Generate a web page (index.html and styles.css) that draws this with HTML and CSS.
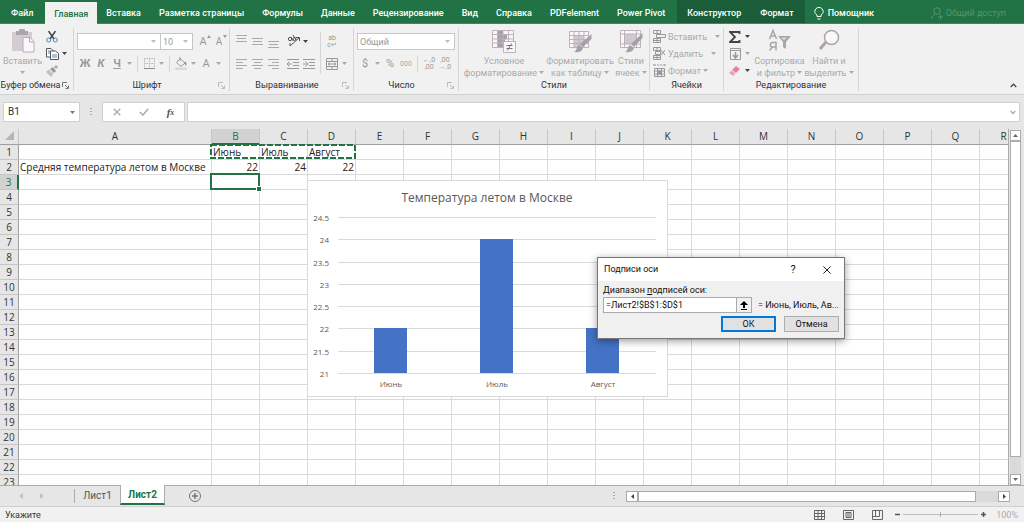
FILE: index.html
```html
<!DOCTYPE html>
<html lang="ru">
<head>
<meta charset="utf-8">
<title>Лист2</title>
<link rel="stylesheet" href="styles.css">
</head>
<body>
<svg class="defs" aria-hidden="true">
  <symbol id="down" viewBox="0 0 5 3"><path d="M0 0h5L2.500 3z" fill="currentColor"/></symbol>
  <symbol id="launch" viewBox="0 0 7 7"><path d="M.5 5V.5H5M3 3l3 3M6.500 3.500v3h-3" fill="none" stroke="currentColor"/></symbol>
</svg>

<nav class="tabs">
  <a href="#" class="tab file">Файл</a>
  <a href="#" class="tab active">Главная</a>
  <a href="#" class="tab">Вставка</a>
  <a href="#" class="tab">Разметка страницы</a>
  <a href="#" class="tab">Формулы</a>
  <a href="#" class="tab">Данные</a>
  <a href="#" class="tab">Рецензирование</a>
  <a href="#" class="tab">Вид</a>
  <a href="#" class="tab">Справка</a>
  <a href="#" class="tab">PDFelement</a>
  <a href="#" class="tab">Power Pivot</a>
  <span class="context">
    <a href="#" class="tab">Конструктор</a>
    <a href="#" class="tab">Формат</a>
  </span>
  <a href="#" class="tab help"><svg width="10" height="13" viewBox="0 0 10 13" fill="none" stroke="#fff"><path d="M3 9.500V8C1.500 7 .8 6 .8 4.600a4.200 4.200 0 0 1 8.400 0C9.200 6 8.500 7 7 8v1.500zM3.500 12h3"/></svg>Помощник</a>
  <button class="share"><svg width="12" height="13" viewBox="0 0 12 13" fill="none" stroke="currentColor"><circle cx="6" cy="4" r="3.300"/><path d="M.5 12C.8 9.500 2 8 4 7.300M7 10h5M9.500 7.500v5"/></svg>Общий доступ</button>
</nav>

<section class="ribbon">
  <div class="group clipboard">
    <div class="tools">
      <button class="big paste"><svg width="24" height="24" viewBox="0 0 24 24"><path d="M1 3h20v19H1z" fill="#d3ccd1"/><path d="M5 2h3a3 3 0 0 1 6 0h3v4H5z" fill="#a9a5a8"/><path d="M12 8.500h7l4 4V23H12z" fill="#faf6f9" stroke="#b5aeb3"/><path d="M18.500 8.500V13H23" fill="none" stroke="#b5aeb3"/></svg><span>Вставить</span><svg class="dn"><use href="#down"/></svg></button>
      <div class="stack live">
        <button class="ib" aria-label="Вырезать"><svg width="12" height="12" viewBox="0 0 12 12" fill="none"><path d="M2.500 0 8 8M9.500 0 4 8" stroke="#444" stroke-width="1.500"/><circle cx="2.700" cy="9" r="2" stroke="#4a86b8"/><circle cx="9.300" cy="9" r="2" stroke="#4a86b8"/></svg></button>
        <div class="row"><button class="ib" aria-label="Копировать"><svg width="13" height="12" viewBox="0 0 13 12" fill="#fff" stroke="#555"><path d="M.5.500H5l2 2V9H.5z"/><path d="M4.500 3h5l3 2.500v6h-8z"/><path d="M2 3h2M2 5h2M6 7h5M6 9h5" stroke="#4a86b8"/></svg></button><button class="dd" aria-label="Ещё"><svg class="dn"><use href="#down"/></svg></button></div>
        <button class="ib" aria-label="Формат по образцу"><svg width="12" height="12" viewBox="0 0 12 12"><path d="M8 2l2-2 2 2-2 2z" fill="#aaa"/><path d="M4 4l3-2 3 4-2 2z" fill="#999"/><path d="M3 4.500 7.500 9 5 12 0 7z" fill="#c4c0c3"/></svg></button>
      </div>
    </div>
    <div class="caption"><span>Буфер обмена</span><button class="launch" aria-label="Буфер обмена"><svg width="7" height="7"><use href="#launch"/></svg></button></div>
  </div>

  <div class="group font">
    <div class="tools two">
      <div class="row">
        <div class="combo name"><input aria-label="Шрифт"><svg class="dn"><use href="#down"/></svg></div>
        <div class="combo size"><input aria-label="Размер" value="10"><svg class="dn"><use href="#down"/></svg></div>
        <button class="ib letter">A<svg class="mark" width="4" height="3" viewBox="0 0 4 3"><path d="M0 3 2 0l2 3z" fill="#999"/></svg></button>
        <button class="ib letter small">A<svg class="mark" width="4" height="3" viewBox="0 0 4 3"><path d="M0 0h4L2 3z" fill="#999"/></svg></button>
      </div>
      <div class="row">
        <button class="ib letter"><b>Ж</b></button><button class="ib letter"><b><i>К</i></b></button><button class="ib letter"><b><u>Ч</u></b></button><button class="dd"><svg class="dn"><use href="#down"/></svg></button>
        <i class="sep"></i>
        <button class="ib" aria-label="Границы"><svg width="11" height="11" viewBox="0 0 11 11" fill="none" stroke="#b9b1b7"><path d="M0 .5h11M0 5.500h11M.5 0v10M5.500 0v10M10.500 0v10" stroke-dasharray="1.500 1"/><path d="M0 10.500h11" stroke="#8e8a8d"/></svg></button><button class="dd"><svg class="dn"><use href="#down"/></svg></button>
        <i class="sep"></i>
        <button class="ib" aria-label="Заливка"><svg width="13" height="13" viewBox="0 0 13 13" fill="none"><path d="M5 1.500 10 6 6 9.500 1.500 5.500zM5 4V0" stroke="#999"/><path d="M10 4c2 2 2 4 1 4.500S9.500 7 10 4z" fill="#999"/><path d="M0 10.500h12V13H0z" fill="#ddd8dc"/></svg></button><button class="dd"><svg class="dn"><use href="#down"/></svg></button>
        <button class="ib letter">A</button><button class="dd"><svg class="dn"><use href="#down"/></svg></button>
      </div>
    </div>
    <div class="caption"><span>Шрифт</span><button class="launch dim" aria-label="Шрифт"><svg width="7" height="7"><use href="#launch"/></svg></button></div>
  </div>

  <div class="group align">
    <div class="tools">
      <div class="two">
        <div class="row">
          <button class="ib" aria-label="По верхнему краю"><svg width="11" height="13" viewBox="0 0 11 13"><path d="M0 .5h11M1 3.500h9M0 6.500h11" stroke="#aaa"/></svg></button>
          <button class="ib" aria-label="По середине"><svg width="11" height="13" viewBox="0 0 11 13"><path d="M0 3.500h11M1 6.500h9M0 9.500h11" stroke="#aaa"/></svg></button>
          <button class="ib" aria-label="По нижнему краю"><svg width="11" height="13" viewBox="0 0 11 13"><path d="M0 6.500h11M1 9.500h9M0 12.500h11" stroke="#aaa"/></svg></button>
          <span class="gap"></span>
          <button class="ib" aria-label="Ориентация"><svg width="13" height="13" viewBox="0 0 13 13" fill="none" stroke="#555"><path d="M3 11 12 3M9 2.500h3.500V6M3 11l0-3"/><circle cx="3" cy="4" r="1.700"/><path d="M4 2l2 4M6 0l3 5"/><circle cx="7.500" cy="4" r="1.500"/></svg></button><button class="dd live"><svg class="dn"><use href="#down"/></svg></button>
        </div>
        <div class="row">
          <button class="ib" aria-label="По левому краю"><svg width="11" height="10" viewBox="0 0 11 10"><path d="M0 .5h11M0 3.500h7M0 6.500h11M0 9.500h7" stroke="#aaa"/></svg></button>
          <button class="ib" aria-label="По центру"><svg width="11" height="10" viewBox="0 0 11 10"><path d="M0 .5h11M2 3.500h7M0 6.500h11M2 9.500h7" stroke="#aaa"/></svg></button>
          <button class="ib" aria-label="По правому краю"><svg width="11" height="10" viewBox="0 0 11 10"><path d="M0 .5h11M4 3.500h7M0 6.500h11M4 9.500h7" stroke="#aaa"/></svg></button>
          <span class="gap"></span>
          <button class="ib" aria-label="Уменьшить отступ"><svg width="12" height="10" viewBox="0 0 12 10" fill="none" stroke="#999"><path d="M0 .5h12M6 3.500h6M6 6.500h6M0 9.500h12M0 5h5M2.500 2.500 0 5l2.500 2.500"/></svg></button>
          <button class="ib" aria-label="Увеличить отступ"><svg width="12" height="10" viewBox="0 0 12 10" fill="none" stroke="#999"><path d="M0 .5h12M6 3.500h6M6 6.500h6M0 9.500h12M0 5h5M2.500 2.500 5 5 2.500 7.500"/></svg></button>
        </div>
      </div>
      <i class="sep tall"></i>
      <div class="two">
        <div class="row"><button class="ib wrap" aria-label="Перенести текст"><span>ab</span><span>c↵</span></button></div>
        <div class="row"><button class="ib" aria-label="Объединить"><svg width="12" height="12" viewBox="0 0 12 12" fill="none" stroke="#999"><path d="M.5.500h11v11H.5zM0 3.500h12M0 8.500h12M6 0v3M6 9v3M2 6h8M3.500 4.500 2 6l1.500 1.500M8.500 4.500 10 6 8.500 7.500"/></svg></button><button class="dd"><svg class="dn"><use href="#down"/></svg></button></div>
      </div>
    </div>
    <div class="caption"><span>Выравнивание</span><button class="launch dim" aria-label="Выравнивание"><svg width="7" height="7"><use href="#launch"/></svg></button></div>
  </div>

  <div class="group number">
    <div class="tools two">
      <div class="row"><div class="combo format"><input aria-label="Числовой формат" value="Общий"><svg class="dn"><use href="#down"/></svg></div></div>
      <div class="row">
        <button class="ib letter">$</button><button class="dd"><svg class="dn"><use href="#down"/></svg></button>
        <button class="ib letter">%</button><button class="ib zeros">000</button>
        <i class="sep"></i>
        <button class="ib wrap"><span>←,0</span><span>,00</span></button><button class="ib wrap"><span>,00</span><span>→,0</span></button>
      </div>
    </div>
    <div class="caption"><span>Число</span><button class="launch dim" aria-label="Число"><svg width="7" height="7"><use href="#launch"/></svg></button></div>
  </div>

  <div class="group styles">
    <div class="tools">
      <button class="big cond"><svg width="24" height="24" viewBox="0 0 24 24"><path d="M.5 1.500h21v17H.5z" fill="#faf6f9"/><path d="M6 1h5v5H6zM6 6h9v4H6zM6 10h7v4H6zM6 14h5v5H6z" fill="#a5a1a4"/><path d="M.5 1.500h21v17H.5zM0 5.500h22M0 10h22M0 14h22M5.500 1v18M11 1v18M16.500 1v18" fill="none" stroke="#bdb3ba"/><path d="M11.500 12.500h12v11h-12z" fill="#faf6f9" stroke="#bdb3ba"/><path d="M14.500 16.500h6M14.500 19.500h6M19.500 14.500l-4 7" stroke="#777"/></svg><span>Условное<br>форматирование <svg class="dn"><use href="#down"/></svg></span></button>
      <button class="big table"><svg width="24" height="24" viewBox="0 0 24 24"><path d="M1.500 2.500h19v16h-19z" fill="#faf6f9"/><path d="M6 6h10v12H6z" fill="#d0c9ce"/><path d="M1.500 2.500h19v16h-19zM1 6.500h20M1 10.500h20M1 14.500h20M6 2v17M11 2v17M16 2v17" fill="none" stroke="#bdb3ba"/><path d="M23.500 5v5L15 18l-3-3z" fill="#a5a1a4"/><path d="M11 16l4 3c-1 4-5 5-9 4 3-1 2-5 5-7z" fill="#a5a1a4"/></svg><span>Форматировать<br>как таблицу <svg class="dn"><use href="#down"/></svg></span></button>
      <button class="big cell"><svg width="24" height="24" viewBox="0 0 24 24"><path d="M1.500 1.500h20v17h-20z" fill="#faf6f9" stroke="#bdb3ba"/><path d="M5 5h13v10H5z" fill="#cfc8cd"/><path d="M5.500 1v18M1 5h21M1 15h21M17.500 1v18" stroke="#bdb3ba"/><path d="M23.500 4v5L15 18l-3-3z" fill="#a5a1a4"/><path d="M11 16l4 3c-1 4-5 5-9 4 3-1 2-5 5-7z" fill="#a5a1a4"/></svg><span>Стили<br>ячеек <svg class="dn"><use href="#down"/></svg></span></button>
    </div>
    <div class="caption"><span>Стили</span></div>
  </div>

  <div class="group cells">
    <div class="tools stack">
      <button class="line"><svg width="13" height="13" viewBox="0 0 13 13" fill="none" stroke="#999"><path d="M.5.500h7v3h-7zM.5 8.500h7v4h-7zM4 0v4M4 8v5M.5 10.500h7M3.500 4.500h9v3h-9z"/></svg>Вставить<svg class="dn"><use href="#down"/></svg></button>
      <button class="line"><svg width="13" height="13" viewBox="0 0 13 13" fill="none" stroke="#999"><path d="M.5.500h7v3h-7zM.5 8.500h7v4h-7zM4 0v4M4 8v5M.5 10.500h7M2.500 4.500h5v3h-5zM8 3l4 5M12 3 8 8"/></svg>Удалить<svg class="dn"><use href="#down"/></svg></button>
      <button class="line close"><svg width="13" height="13" viewBox="0 0 13 13" fill="none" stroke="#999"><path d="M1 0v2M12 0v2M1 1h11" stroke-dasharray="2 1"/><path d="M1.500 4.500h10v8h-10zM1 7h11M1 10h11M4.500 4v9M8.500 4v9"/><path d="M5 7h3v3H5z" fill="#999"/></svg>Формат<svg class="dn"><use href="#down"/></svg></button>
    </div>
    <div class="caption"><span>Ячейки</span></div>
  </div>

  <div class="group editing">
    <div class="tools">
      <div class="stack">
        <div class="row live"><button class="ib" aria-label="Автосумма"><svg width="12" height="12" viewBox="0 0 12 12"><path d="M10.500 3V1H1l5 5-5 5h9.500V9" fill="none" stroke="#444" stroke-width="1.800"/></svg></button><button class="dd"><svg class="dn"><use href="#down"/></svg></button></div>
        <div class="row"><button class="ib" aria-label="Заполнить"><svg width="11" height="12" viewBox="0 0 11 12" fill="none" stroke="#999"><path d="M.5.500h10v11H.5zM0 2.500h11"/><path d="M5.500 4v6M3 7l2.500 3L8 7" stroke-width="1.500"/></svg></button><button class="dd"><svg class="dn"><use href="#down"/></svg></button></div>
        <div class="row live"><button class="ib" aria-label="Очистить"><svg width="12" height="10" viewBox="0 0 12 10"><path d="M7 0l4 3-4 4-4-3z" fill="#ea8095"/><path d="M2.500 4.500l4 3L4 10 0 7z" fill="#f0a3b1"/></svg></button><button class="dd"><svg class="dn"><use href="#down"/></svg></button></div>
      </div>
      <button class="big sort"><svg width="24" height="24" viewBox="0 0 24 24"><g fill="none" stroke="#a9a5a8" stroke-width="1.500"><path d="M1.500 10 5 1.500 8.500 10M2.500 7h5M8 21.500v-8H4.500a2 2 0 0 0 0 4.500H8M4.500 18l-3 3.500"/></g><path d="M10 7h13l-5 6v7l-3-2v-5z" fill="#a9a5a8"/><path d="M13 8.500h6l-3 3z" fill="#d9d4d8"/></svg><span>Сортировка<br>и фильтр <svg class="dn"><use href="#down"/></svg></span></button>
      <button class="big find"><svg width="24" height="24" viewBox="0 0 24 24" fill="none"><path d="M9 13 3 20" stroke="#a9a5a8" stroke-width="3"/><circle cx="14.500" cy="8.500" r="7" fill="#faf6f9" stroke="#a9a5a8" stroke-width="1.500"/></svg><span>Найти и<br>выделить <svg class="dn"><use href="#down"/></svg></span></button>
    </div>
    <div class="caption"><span>Редактирование</span></div>
  </div>
  <button class="collapse" aria-label="Свернуть ленту"><svg width="7" height="5" viewBox="0 0 7 5"><path d="M.7 4 3.500 1.200 6.300 4" fill="none" stroke="#444" stroke-width="1.300"/></svg></button>
</section>

<section class="formula">
  <div class="namebox"><input aria-label="Имя" value="B1"><svg class="dn"><use href="#down"/></svg></div>
  <span class="grip"></span>
  <div class="fx">
    <button aria-label="Отмена"><svg width="8" height="8" viewBox="0 0 8 8"><path d="M.7.700l6.600 6.600M7.300.7.700 7.300" stroke="#aaa" stroke-width="1.300"/></svg></button>
    <button aria-label="Ввод"><svg width="10" height="8" viewBox="0 0 10 8"><path d="M.8 4 4 7 9.200.8" fill="none" stroke="#aaa" stroke-width="1.500"/></svg></button>
    <button class="fn">f<small>x</small></button>
  </div>
  <div class="entry"><input aria-label="Строка формул"><svg width="6" height="5" viewBox="0 0 6 5"><path d="M.7 1 3 3.500 5.300 1" fill="none" stroke="#aaa" stroke-width="1.300"/></svg></div>
</section>

<main class="work">
  <div class="sheet" id="sheet">
    <table id="grid"></table>
    <svg class="ants" aria-hidden="true"><rect width="100%" height="100%"/></svg>
    <div class="cursor"></div>
    <svg class="chart" viewBox="0 0 359 215" id="chart" role="img" aria-label="Температура летом в Москве"></svg>
  </div>
  <div class="vscroll">
    <button aria-label="Вверх"><svg width="5" height="3" viewBox="0 0 5 3"><path d="M0 3 2.500 0 5 3z" fill="#666"/></svg></button>
    <div class="track"><span class="thumb"></span></div>
    <button aria-label="Вниз"><svg width="5" height="3" viewBox="0 0 5 3"><path d="M0 0h5L2.500 3z" fill="#666"/></svg></button>
  </div>
</main>

<footer class="sheets">
  <div class="arrows"><button aria-label="Назад"><svg width="4" height="6" viewBox="0 0 4 6"><path d="M4 0v6L0 3z" fill="#c4c4c4"/></svg></button><button aria-label="Вперёд"><svg width="4" height="6" viewBox="0 0 4 6"><path d="M0 0v6l4-3z" fill="#c4c4c4"/></svg></button></div>
  <button class="sheet-tab">Лист1</button>
  <button class="sheet-tab on">Лист2</button>
  <button class="add" aria-label="Новый лист"><svg width="12" height="12" viewBox="0 0 12 12" fill="none" stroke="#777"><circle cx="6" cy="6" r="5.500"/><path d="M3 6h6M6 3v6" stroke-width="1.500"/></svg></button>
  <span class="grip"></span>
  <div class="hscroll">
    <button aria-label="Влево"><svg width="3" height="5" viewBox="0 0 3 5"><path d="M3 0v5L0 2.500z" fill="#444"/></svg></button>
    <div class="track"><span class="thumb"></span></div>
    <button aria-label="Вправо"><svg width="3" height="5" viewBox="0 0 3 5"><path d="M0 0v5l3-2.500z" fill="#444"/></svg></button>
  </div>
</footer>

<footer class="status">
  <span class="mode">Укажите</span>
  <button aria-label="Обычный"><svg width="11" height="10" viewBox="0 0 11 10" fill="none" stroke="#666"><path d="M.5.500h10v9H.5zM0 3.500h11M0 6.500h11M4 0v10M7.500 0v10"/></svg></button>
  <button aria-label="Разметка"><svg width="11" height="10" viewBox="0 0 11 10" fill="none" stroke="#666"><path d="M.5.500h10v9H.5zM3 2.500h5v5H3zM4 4h3M4 6h3"/></svg></button>
  <button aria-label="Страничный"><svg width="11" height="10" viewBox="0 0 11 10" fill="none" stroke="#666"><path d="M.5.500h10v9H.5zM3.500 0v6M0 6.500h7.500V0"/></svg></button>
  <div class="zoom"><button aria-label="Мельче"><svg width="5" height="5" viewBox="0 0 5 5"><path d="M0 2.500h5" stroke="#555" stroke-width="1.500"/></svg></button><span class="rail"></span><button aria-label="Крупнее"><svg width="5" height="5" viewBox="0 0 5 5"><path d="M0 2.500h5M2.500 0v5" stroke="#555" stroke-width="1.500"/></svg></button><span class="pct">100%</span></div>
</footer>

<div class="dialog" role="dialog" aria-labelledby="dlg">
  <header><h2 id="dlg">Подписи оси</h2><button aria-label="Справка" class="q">?</button><button aria-label="Закрыть"><svg width="8" height="8" viewBox="0 0 8 8"><path d="M.4.400l7.200 7.200M7.600.4.400 7.600" stroke="#222"/></svg></button></header>
  <div class="body">
    <label for="range">Диапазон <u>п</u>одписей оси:</label>
    <div class="pick">
      <div class="range"><input id="range" value="=Лист2!$B$1:$D$1"><button aria-label="Свернуть"><svg width="8" height="9" viewBox="0 0 8 9"><path d="M4 0l4 4H5v3H3V4H0zM1 8h6v1H1z" fill="#000"/></svg></button></div>
      <output for="range">= Июнь, Июль, Ав...</output>
    </div>
    <div class="actions"><button class="ok">ОК</button><button>Отмена</button></div>
  </div>
</div>
<script src="script.js"></script>
</body>
</html>
```
FILE: styles.css
```css
* { box-sizing: border-box; }
html, body { height: 100%; }
body {
  margin: 0;
  display: flex;
  flex-direction: column;
  overflow: hidden;
  position: relative;
  background: #e6e6e6;
  color: #333;
  font: 9px/12px Roboto, "Open Sans", sans-serif;
}
button, input { font: inherit; color: inherit; }
button { border: 0; padding: 0; background: none; display: flex; align-items: center; justify-content: center; }
input { border: 0; padding: 0; min-width: 0; background: none; outline: 0; }
svg { flex: none; }
.defs { position: absolute; width: 0; height: 0; }
.dn { width: 5px; height: 3px; }

/* tab strip */
.tabs { display: flex; align-items: stretch; height: 24px; background: #217346; flex: none; border-bottom: 1px solid #3f8660; }
.tab { display: flex; align-items: center; padding: 3px 9px 0; color: #fff; text-decoration: none; white-space: nowrap; font-weight: 500; }
.tab.file { padding-left: 11px; padding-right: 12px; }
.tab.active { background: #f1f1f1; color: #217346; margin-top: 2px; margin-bottom: -1px; padding-top: 1px; }
.context { display: flex; background: #1b5d38; margin-left: 3px; padding-right: 2px; }
.context .tab { padding-left: 10px; }
.help { gap: 4px; }
.share { margin-left: auto; margin-right: 18px; padding-top: 3px; gap: 3px; color: #57936f; white-space: nowrap; }

/* ribbon */
.ribbon { display: flex; flex: none; height: 71px; background: #f1f1f1; border-bottom: 1px solid #d0d0d0; color: #aaa; padding: 4px 0 3px; }
.group { display: flex; flex-direction: column; justify-content: space-between; border-right: 1px solid #d6d6d6; padding: 0 3px; flex: none; }
.clipboard { width: 74px; }
.font { width: 156px; }
.align { width: 124px; }
.number { width: 105px; }
.styles { width: 191px; }
.cells { width: 74px; }
.editing { width: 135px; }
.tools { display: flex; }
.two { display: flex; flex-direction: column; gap: 5px; padding-top: 5px; }
.align .tools .two:first-child { width: 84px; }
.row { display: flex; align-items: center; height: 17px; }
.stack { display: flex; flex-direction: column; }
.live { color: #444; }
.ib { width: 16px; height: 17px; position: relative; flex: none; }
.dd { width: 9px; height: 17px; flex: none; }
.gap { width: 4px; }
.sep { width: 1px; height: 16px; background: #d6d6d6; margin: 0 3px; flex: none; }
.sep.tall { height: 42px; margin-top: 4px; }
.letter { font-size: 11px; color: #999; }
.letter.small { font-size: 10px; }
.letter .mark { position: absolute; right: 0; top: 2px; }
.zeros { font-size: 7px; }
.wrap { flex-direction: column; font-size: 7px; line-height: 7px; color: #999; white-space: nowrap; }
.combo { display: flex; align-items: center; height: 17px; border: 1px solid #c6c6c6; background: #fff; padding: 0 4px 0 2px; color: #999; }
.combo input { flex: 1; }
.combo .dn { color: #bbb; }
.combo.name { width: 84px; }
.combo.size { width: 33px; margin: 0 2px 0 -1px; }
.combo.format { width: 98px; }
.big { flex-direction: column; justify-content: flex-start; line-height: 12px; white-space: nowrap; padding-top: 1px; gap: 2px; flex: none; }
.big .dn { vertical-align: 2px; }
.paste { width: 39px; margin-right: 2px; }
.paste > .dn { margin-top: 2px; }
.cond { width: 84px; }
.table { width: 68px; }
.cell { width: 34px; }
.sort { width: 51px; margin-left: 2px; }
.find { width: 48px; }
.line { height: 17px; gap: 2px; justify-content: flex-start; }
.line .dn { margin-left: 6px; }
.line.close .dn { margin-left: 0; }
.caption { display: flex; align-items: center; color: #333; height: 12px; white-space: nowrap; }
.caption span { flex: 1; text-align: center; }
.clipboard .caption { margin-left: -3px; }
.caption .launch { color: #777; width: 9px; }
.caption .launch.dim { color: #bbb; }
.collapse { margin-left: auto; align-self: flex-end; width: 22px; height: 12px; }

/* formula bar */
.formula { display: flex; flex: none; height: 34px; padding: 7px 4px 7px 3px; }
.namebox, .fx, .entry { display: flex; align-items: center; background: #fff; border: 1px solid #d0d0d0; height: 20px; }
.namebox { width: 77px; padding: 0 4px; font-size: 10px; }
.namebox input, .entry input { flex: 1; }
.namebox .dn, .entry svg { color: #777; }
.grip { width: 2px; height: 9px; align-self: center; background: repeating-linear-gradient(#aaa 0 1px, transparent 1px 3px); margin: 0 10px; }
.fx { width: 83px; margin-right: 2px; }
.fx button { flex: 1; }
.fn { font: italic bold 11px "Liberation Serif", serif; color: #555; }
.fn small { font-size: 8px; }
.entry { flex: 1; padding: 0 3px; }

/* worksheet */
.work { display: flex; flex: 1; min-height: 0; border-bottom: 1px solid #ababab; }
.sheet { flex: 1; min-width: 0; overflow: hidden; position: relative; border-right: 1px solid #ababab; }
#grid { border-collapse: separate; border-spacing: 0; table-layout: fixed; background: #fff; color: #222; font-family: "Open Sans", sans-serif; font-size: 10px; line-height: 14px; }
#grid th { background: #e6e6e6; font-weight: 400; padding: 0; border-right: 1px solid #c6c6c6; border-bottom: 1px solid #c6c6c6; text-align: center; color: #333; }
#grid thead th { height: 16px; line-height: 13px; border-bottom-color: #9f9f9f; }
#grid td { height: 15px; padding: 0 1px; border-right: 1px solid #d9d9d9; border-bottom: 1px solid #d9d9d9; white-space: nowrap; }
#grid td.num { text-align: right; }
#grid tbody th { border-right-color: #9f9f9f; }
#grid th.sel { background: #d2d2d2; color: #217346; }
#grid thead th.sel { border-bottom: 2px solid #217346; }
#grid tbody th.sel { border-right: 2px solid #217346; }
.ants { position: absolute; left: 211px; top: 16px; width: 144px; height: 13px; overflow: visible; }
.ants rect { fill: none; stroke: #217346; stroke-width: 2; stroke-dasharray: 6 2; }
.cursor { position: absolute; left: 210px; top: 44px; width: 50px; height: 17px; border: 2px solid #217346; }
.cursor::after { content: ""; position: absolute; right: -3px; bottom: -3px; width: 4px; height: 4px; background: #217346; outline: 1px solid #fff; }
.chart { position: absolute; left: 307px; top: 51px; width: 361px; height: 217px; background: #fff; border: 1px solid #d9d9d9; font-family: "Open Sans", sans-serif; }
.chart text { fill: #595959; font-size: 8px; text-anchor: middle; }
.chart .title { font-size: 12px; }
.chart .tick { text-anchor: end; }
.chart line { stroke: #d9d9d9; }
.chart rect { fill: #4472c4; }

.vscroll { width: 15px; display: flex; flex-direction: column; padding: 1px 3px 0 1px; }
.vscroll button { height: 11px; background: #fff; border: 1px solid #ababab; }
.track { flex: 1; display: flex; background: #dadada; }
.vscroll .track { flex-direction: column; }
.thumb { background: #fff; border: 1px solid #ababab; }
.vscroll .thumb { height: 95%; }

/* sheet tabs */
.sheets { display: flex; flex: none; height: 21px; border-bottom: 1px solid #cfcfcf; }
.arrows { display: flex; width: 75px; justify-content: flex-start; gap: 17px; padding-left: 19px; border-right: 1px solid #ababab; margin: 3px 0; }
.sheet-tab { width: 45px; height: 20px; font-size: 10px; color: #555; }
.sheet-tab.on { background: #fff; color: #217346; font-weight: 700; border: solid #ababab; border-width: 0 1px; border-bottom: 2px solid #217346; margin-top: -1px; padding-top: 2px; }
.add { margin-left: 23px; width: 14px; }
.sheets .grip { margin-left: auto; margin-right: 11px; }
.hscroll { display: flex; width: 38%; max-width: 384px; margin: 5px 14px 4px 0; }
.hscroll button { width: 12px; background: #fff; border: 1px solid #ababab; }
.hscroll .thumb { width: 94%; }

/* status bar */
.status { display: flex; align-items: center; flex: none; height: 15px; background: #f1f1f1; padding: 0 6px 0 5px; }
.status > button { width: 11px; margin-right: 18px; }
.status > button:nth-of-type(3) { margin-right: 12px; }
.mode { flex: 1; }
.zoom { display: flex; align-items: center; gap: 3px; }
.rail { width: 75px; height: 5px; background: linear-gradient(#aaa, #aaa) center / 1px 5px no-repeat, linear-gradient(#bbb, #bbb) center / 100% 1px no-repeat; }
.pct { color: #aaa; margin-left: 7px; }

/* dialog */
.dialog { position: absolute; left: 597px; top: 257px; width: 248px; background: #f0f0f0; border: 1px solid #777; box-shadow: 0 2px 8px rgba(0,0,0,.4); color: #111; }
.dialog header { display: flex; height: 23px; background: #fff; padding-left: 6px; }
.dialog h2 { flex: 1; margin: 0; font-size: 9px; font-weight: 400; line-height: 23px; }
.dialog header button { width: 34px; }
.dialog .q { font-size: 11px; }
.body { padding: 3px 5px 6px; display: flex; flex-direction: column; }
.pick { display: flex; align-items: center; justify-content: space-between; height: 16px; margin-top: 1px; }
.range { display: flex; width: 149px; height: 16px; background: #fff; border: 1px solid #aaa; }
.range input { flex: 1; padding-left: 2px; }
.range button { width: 15px; border-left: 1px solid #aaa; background: #f0f0f0; }
.actions { display: flex; justify-content: flex-end; gap: 8px; margin-top: 3px; }
.actions button { width: 55px; height: 16px; border: 1px solid #adadad; background: #e1e1e1; }
.actions .ok { border: 2px solid #0078d7; }
```
FILE: script.js
```js
const HEAD = 19, FIRST = 193, COL = 48, ROW = 15;
const values = {
  B1: 'Июнь', C1: 'Июль', D1: 'Август',
  A2: 'Средняя температура летом в Москве', B2: 22, C2: 24, D2: 22
};

function columnName(i) {
  return (i >= 26 ? columnName(Math.floor(i / 26) - 1) : '') + String.fromCharCode(65 + i % 26);
}

/* as many columns and rows as the visible area holds */
function drawGrid() {
  const sheet = document.getElementById('sheet');
  const grid = document.getElementById('grid');
  const extra = Math.ceil((sheet.clientWidth - HEAD - FIRST) / COL);
  const rows = Math.ceil((sheet.clientHeight - 16) / ROW);
  const names = Array.from({ length: extra + 1 }, (_, i) => columnName(i));

  let html = `<colgroup><col style="width:${HEAD}px"><col style="width:${FIRST}px">` +
    `<col style="width:${COL}px">`.repeat(extra) + '</colgroup><thead><tr><th>' +
    '<svg width="9" height="9" viewBox="0 0 9 9"><path d="M9 0v9H0z" fill="#b5b5b5"/></svg></th>';
  for (const c of names) html += `<th scope="col"${c === 'B' ? ' class="sel"' : ''}>${c}</th>`;
  html += '</tr></thead><tbody>';
  for (let r = 1; r <= rows; r++) {
    html += `<tr><th scope="row"${r === 3 ? ' class="sel"' : ''}>${r}</th>`;
    for (const c of names) {
      const v = values[c + r];
      html += `<td${typeof v === 'number' ? ' class="num"' : ''}>${v ?? ''}</td>`;
    }
    html += '</tr>';
  }
  grid.innerHTML = html + '</tbody>';
  grid.style.width = `${HEAD + FIRST + COL * extra}px`;
}
drawGrid();
addEventListener('resize', drawGrid);

/* column chart */
const data = [['Июнь', 22], ['Июль', 24], ['Август', 22]];
const base = 193, step = 22.286, left = 30, slot = 106;
let svg = '<text class="title" x="179" y="21">Температура летом в Москве</text>';
for (let i = 0; i <= 7; i++) {
  const y = Math.round(base - i * step);
  svg += `<line x1="${left}" x2="348" y1="${y - 0.5}" y2="${y - 0.5}"/>` +
    `<text class="tick" x="21" y="${y + 3}">${21 + i / 2}</text>`;
}
data.forEach(([name, v], i) => {
  const mid = left + slot * (i + 0.5);
  const h = Math.round((v - 21) * 2 * step);
  svg += `<rect x="${mid - 17}" y="${base - 1 - h}" width="33" height="${h}"/>` +
    `<text x="${mid}" y="206">${name}</text>`;
});
document.getElementById('chart').innerHTML = svg;
```
